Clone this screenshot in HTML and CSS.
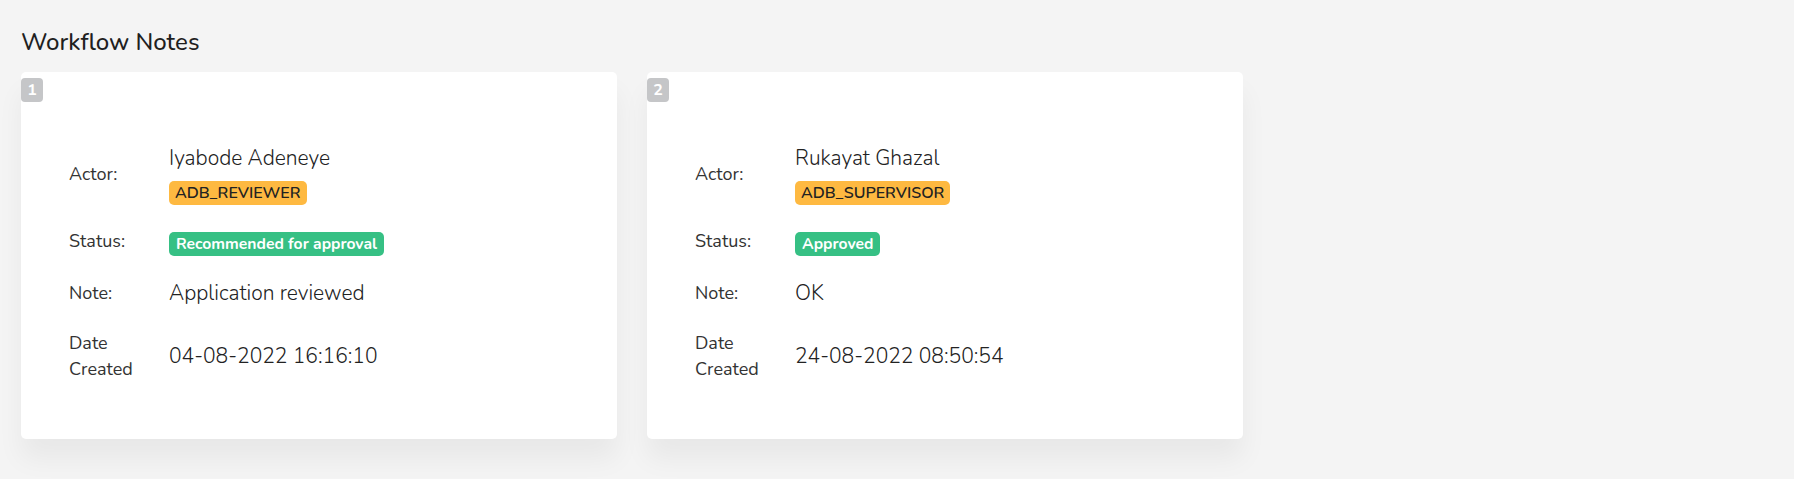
FILE: index.html
```html
<!DOCTYPE html>
<html lang="en">
<head>
<meta charset="utf-8">
<title>Workflow Notes</title>
<link rel="stylesheet" href="styles.css">
</head>
<body>
<section class="section">
  <h2 class="title">Workflow Notes</h2>
  <div class="cards">
    <div class="card">
      <span class="num">1</span>
      <div class="grid">
        <div class="label">Actor:</div>
        <div class="value actor">
          <span class="name">Iyabode Adeneye</span>
          <span class="role">ADB_REVIEWER</span>
        </div>
        <div class="label">Status:</div>
        <div class="value"><span class="status">Recommended for approval</span></div>
        <div class="label">Note:</div>
        <div class="value">Application reviewed</div>
        <div class="label">Date<br>Created</div>
        <div class="value">04-08-2022 16:16:10</div>
      </div>
    </div>
    <div class="card">
      <span class="num">2</span>
      <div class="grid">
        <div class="label">Actor:</div>
        <div class="value actor">
          <span class="name">Rukayat Ghazal</span>
          <span class="role">ADB_SUPERVISOR</span>
        </div>
        <div class="label">Status:</div>
        <div class="value"><span class="status">Approved</span></div>
        <div class="label">Note:</div>
        <div class="value">OK</div>
        <div class="label">Date<br>Created</div>
        <div class="value">24-08-2022 08:50:54</div>
      </div>
    </div>
  </div>
</section>
</body>
</html>
```
FILE: styles.css
```css
html, body {
  margin: 0;
  padding: 0;
  background: #ffffff;
}
body {
  font-family: "Nunito", Lato, "Noto Sans", sans-serif;
  color: #222222;
}
.section {
  background: #f4f4f4;
  height: 479px;
  box-sizing: border-box;
  padding: 28px 21px 0 21px;
}
.title {
  margin: 0;
  font-size: 24px;
  line-height: 28px;
  font-weight: 500;
  color: #1f1f1f;
}
.cards {
  display: flex;
  gap: 30px;
  margin-top: 16px;
}
.card {
  width: 596px;
  height: 367px;
  box-sizing: border-box;
  background: #ffffff;
  border-radius: 5px;
  box-shadow: 0 20px 27px 0 rgba(0, 0, 0, 0.05);
  padding-top: 6px;
}
.num {
  display: flex;
  align-items: center;
  justify-content: center;
  width: 22px;
  height: 24px;
  border-radius: 4px;
  background: #c5c6c8;
  color: #ffffff;
  font-weight: 700;
  font-size: 16px;
}
.grid {
  display: grid;
  grid-template-columns: 100px 1fr;
  row-gap: 21.5px;
  align-items: center;
  margin: 41px 0 0 48px;
}
.label {
  font-size: 18px;
  line-height: 26.5px;
  color: #333333;
}
.value {
  font-size: 21px;
  line-height: 30px;
  font-weight: 300;
  color: #222222;
}
.actor {
  display: flex;
  flex-direction: column;
  align-items: flex-start;
  gap: 8px;
}
.role {
  display: inline-block;
  background: #feb941;
  color: #222222;
  font-weight: 600;
  font-size: 16px;
  line-height: 24px;
  padding: 0 6px;
  border-radius: 5px;
}
.status {
  display: inline-block;
  background: #36c084;
  color: #ffffff;
  font-weight: 700;
  font-size: 15.7px;
  line-height: 24px;
  padding: 0 7px;
  border-radius: 5px;
}
```
